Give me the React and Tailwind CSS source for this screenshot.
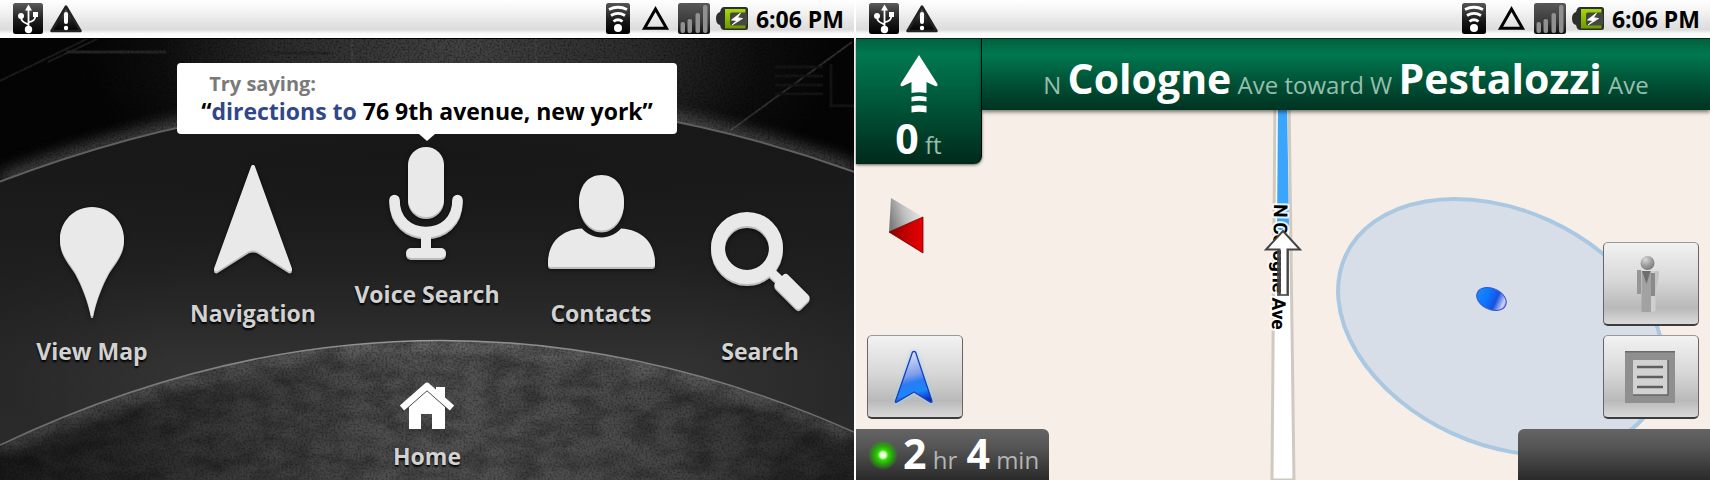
import React from "react";

function UsbIcon({ id }) {
  return (
    <svg className="h-8 w-[30px] shrink-0" viewBox="0 0 30 32" aria-hidden="true">
      <defs>
        <linearGradient id={id} x1="0" y1="0" x2="0" y2="1">
          <stop offset="0" stopColor="#5a5a5a" />
          <stop offset="0.55" stopColor="#1c1c1c" />
          <stop offset="1" stopColor="#000" />
        </linearGradient>
      </defs>
      <rect y="0" width="30" height="31" rx="2.5" fill={`url(#${id})`} />
      <g stroke="#fff" strokeWidth="1.8" fill="none">
        <path d="M15.5 6v20M15.5 21.5C11 19.5 8 18.500 8 13.500M15.500 19.500C20 18 22.500 17 22.500 12" />
      </g>
      <path d="M15.500 1.500l-3.500 6h7z" fill="#fff" />
      <circle cx="8" cy="13" r="3" fill="#fff" />
      <rect x="20" y="9" width="5" height="5" fill="#fff" />
      <circle cx="15.500" cy="26.500" r="3.700" fill="#fff" />
    </svg>
  );
}

function WarningIcon({ id }) {
  return (
    <svg className="h-8 w-8 shrink-0" viewBox="0 0 32 32" aria-hidden="true">
      <defs>
        <linearGradient id={id} x1="0" y1="0" x2="0" y2="1">
          <stop offset="0" stopColor="#6a6a6a" />
          <stop offset="0.6" stopColor="#1c1c1c" />
          <stop offset="1" stopColor="#000" />
        </linearGradient>
      </defs>
      <path
        d="M16 3.500L30.500 28H1.500z"
        fill={`url(#${id})`}
        stroke="#222"
        strokeWidth="2.500"
        strokeLinejoin="round"
      />
      <rect x="14" y="9" width="4" height="12" rx="2" fill="#fff" />
      <circle cx="16" cy="25" r="2.200" fill="#fff" />
    </svg>
  );
}

function WifiIcon({ id }) {
  return (
    <svg className="h-8 w-6 shrink-0" viewBox="0 0 24 32" aria-hidden="true">
      <defs>
        <linearGradient id={id} x1="0" y1="0" x2="0" y2="1">
          <stop offset="0" stopColor="#555" />
          <stop offset="0.6" stopColor="#151515" />
          <stop offset="1" stopColor="#000" />
        </linearGradient>
      </defs>
      <rect width="24" height="31" rx="2.500" fill={`url(#${id})`} />
      <g stroke="#fff" fill="none" strokeWidth="2.800">
        <path d="M3 6.500Q12 2 21 6.500" />
        <path d="M5 12.500Q12 8.300 19 12.500" />
        <path d="M7.500 18.500Q12 15 16.500 18.500" />
      </g>
      <circle cx="12" cy="25" r="4" fill="#fff" />
    </svg>
  );
}

function TriangleIcon() {
  return (
    <svg className="h-8 w-9 shrink-0" viewBox="0 0 36 32" aria-hidden="true">
      <path d="M19.500 6L30.500 25.300H8.500z" fill="none" stroke="#000" strokeWidth="3" />
    </svg>
  );
}

function SignalIcon({ id }) {
  return (
    <svg className="h-8 w-8 shrink-0" viewBox="0 0 32 32" aria-hidden="true">
      <defs>
        <linearGradient id={id} x1="0" y1="0" x2="0" y2="1">
          <stop offset="0" stopColor="#585858" />
          <stop offset="0.6" stopColor="#3a3a3a" />
          <stop offset="1" stopColor="#0c0c0c" />
        </linearGradient>
      </defs>
      <rect width="32" height="31" rx="2.500" fill={`url(#${id})`} />
      <g fill="#909090">
        <rect x="2.500" y="19" width="4.500" height="11" rx="2" />
        <rect x="9.500" y="16" width="4.500" height="14" rx="2" />
        <rect x="17.500" y="10" width="4.500" height="20" rx="2" />
        <rect x="25" y="2" width="4.500" height="28" rx="2" />
      </g>
    </svg>
  );
}

function BatteryIcon({ id }) {
  return (
    <svg className="h-8 w-8 shrink-0" viewBox="0 0 32 32" aria-hidden="true">
      <defs>
        <linearGradient id={id} x1="0" y1="0" x2="0" y2="1">
          <stop offset="0" stopColor="#a6d80c" />
          <stop offset="1" stopColor="#6f9800" />
        </linearGradient>
      </defs>
      <path
        d="M8 4h21.500q2.500 0 2.500 2.500v18q0 2.500-2.500 2.500H8q-2 0-3-2l-1-3q-4-1-4-6.500T4 9l1-3q1-2 3-2z"
        fill="#2d2f2a"
      />
      <path d="M9 6h20.500v4H16v12h13.500v3.500H9z" fill={`url(#${id})`} />
      <rect x="14" y="9.500" width="17" height="13" rx="2" fill="#45483f" />
      <path d="M24.500 10L15.500 17l5.500.5-5 4.500 10.500-6.500-5-.8z" fill="#fff" stroke="#fff" strokeWidth="0.800" />
    </svg>
  );
}

function StatusBar({ prefix }) {
  return (
    <header className="flex h-[38px] shrink-0 items-center justify-between bg-[linear-gradient(to_bottom,#ffffff_0%,#f6f6f6_25%,#e4e4e4_60%,#dcdcdc_78%,#fafafa_88%,#ffffff_100%)] pl-[13px] pr-[10px]">
      <div className="flex items-center gap-[7px]">
        <UsbIcon id={`${prefix}-usb`} />
        <WarningIcon id={`${prefix}-warn`} />
      </div>
      <div className="flex items-center gap-[6px]">
        <WifiIcon id={`${prefix}-wifi`} />
        <TriangleIcon />
        <SignalIcon id={`${prefix}-signal`} />
        <BatteryIcon id={`${prefix}-battery`} />
        <time className="pl-0.5 text-[23px] font-bold leading-8 text-black">6:06 PM</time>
      </div>
    </header>
  );
}

function DialBackdrop() {
  return (
    <svg
      className="absolute inset-0 h-full w-full"
      viewBox="0 0 854 442"
      preserveAspectRatio="none"
      aria-hidden="true"
    >
      <defs>
        <radialGradient id="sky" cx="0.54" cy="0.02" r="0.44">
          <stop offset="0" stopColor="#444" />
          <stop offset="0.5" stopColor="#2c2c2c" />
          <stop offset="0.8" stopColor="#0e0e0e" />
          <stop offset="1" stopColor="#050505" />
        </radialGradient>
        <linearGradient id="ring" x1="0" y1="0" x2="0" y2="1">
          <stop offset="0.15" stopColor="#151515" />
          <stop offset="0.45" stopColor="#212121" />
          <stop offset="0.7" stopColor="#323232" />
          <stop offset="1" stopColor="#3c3c3c" />
        </linearGradient>
        <radialGradient id="ringSides" cx="0.5" cy="0.6" r="0.52">
          <stop offset="0.6" stopColor="#1c1c1c" stopOpacity="0" />
          <stop offset="1" stopColor="#1c1c1c" stopOpacity="0.5" />
        </radialGradient>
        <linearGradient id="hub" x1="0" y1="0" x2="1" y2="0">
          <stop offset="0" stopColor="#1a1a1a" />
          <stop offset="0.25" stopColor="#383838" />
          <stop offset="0.5" stopColor="#545454" />
          <stop offset="0.75" stopColor="#4a4a4a" />
          <stop offset="1" stopColor="#242424" />
        </linearGradient>
        <linearGradient id="edge" x1="0" y1="0" x2="1" y2="0">
          <stop offset="0" stopColor="#6a6a6a" />
          <stop offset="0.5" stopColor="#999" />
          <stop offset="1" stopColor="#6a6a6a" />
        </linearGradient>
        <filter id="soft" x="-20%" y="-50%" width="140%" height="200%">
          <feGaussianBlur stdDeviation="8" />
        </filter>
        <filter id="stone" x="0" y="0" width="100%" height="100%">
          <feTurbulence type="fractalNoise" baseFrequency="0.035 0.06" numOctaves="6" seed="11" />
          <feColorMatrix values="0 0 0 0 0  0 0 0 0 0  0 0 0 0 0  2 0 0 0 -0.700" />
        </filter>
        <filter id="fine" x="0" y="0" width="100%" height="100%">
          <feTurbulence type="fractalNoise" baseFrequency="0.5" numOctaves="2" seed="3" />
          <feColorMatrix values="0 0 0 0 0  0 0 0 0 0  0 0 0 0 0  2 0 0 0 -0.800" />
        </filter>
        <clipPath id="hubClip">
          <path d="M0 407Q427 204 854 394V442H0z" />
        </clipPath>
        <clipPath id="skyClip">
          <path d="M0 0H854V133Q427 -20 0 143z" />
        </clipPath>
      </defs>

      <rect width="854" height="442" fill="url(#sky)" />
      <g clipPath="url(#skyClip)">
        <path d="M0 42L95 -4M48 23L110 -6" stroke="#1e1e1e" strokeWidth="2" />
        <path d="M66 13H166M250 14H330" stroke="#262626" strokeWidth="3" />
        <path d="M536 0V26M352 0V26" stroke="#4c4c4c" strokeWidth="1" />
        <path d="M852 3L730 92" stroke="#303030" strokeWidth="2" />
        <path d="M775 28h48M775 37h48M775 46h48M775 55h48M831 25v42h23" stroke="#151515" strokeWidth="3" fill="none" />
        <path d="M0 143Q427 -20 854 133" stroke="#888" strokeWidth="12" fill="none" filter="url(#soft)" opacity="0.700" />
        <rect width="854" height="150" filter="url(#fine)" opacity="0.500" />
      </g>
      <path d="M0 143Q427 -20 854 133V442H0z" fill="url(#ring)" />
      <path d="M0 143Q427 -20 854 133V442H0z" fill="url(#ringSides)" />
      <path d="M0 143Q427 -20 854 133" stroke="#606060" strokeWidth="2" fill="none" />

      <path d="M0 407Q427 204 854 394V442H0z" fill="url(#hub)" />
      <g clipPath="url(#hubClip)">
        <path d="M0 410Q427 207 854 397" stroke="#858585" strokeWidth="12" fill="none" filter="url(#soft)" opacity="0.600" />
        <rect y="290" width="854" height="152" filter="url(#stone)" opacity="0.300" />
        <rect y="290" width="854" height="152" filter="url(#fine)" opacity="0.400" />
      </g>
      <path d="M0 407Q427 204 854 394" stroke="url(#edge)" strokeWidth="1.500" fill="none" />
    </svg>
  );
}

function DockIcon({ children }) {
  return (
    <svg
      className="h-[116px] w-[116px] overflow-visible fill-[#e9e9e9] [filter:drop-shadow(0_2px_0_#bcbcbc)_drop-shadow(0_1px_2px_#00000099)]"
      viewBox="0 0 116 116"
      aria-hidden="true"
    >
      {children}
    </svg>
  );
}

function DockButton({ label, offset, children }) {
  return (
    <div className={`flex justify-center ${offset}`}>
      <button type="button" className="flex flex-col items-center gap-4">
        <DockIcon>{children}</DockIcon>
        <span className="whitespace-nowrap text-[23px] font-bold leading-8 text-[#d2d2d2] [text-shadow:0_2px_2px_#000]">
          {label}
        </span>
      </button>
    </div>
  );
}

function CarHome() {
  return (
    <section className="flex flex-col bg-black">
      <StatusBar prefix="home" />
      <main className="relative flex flex-1 flex-col border-t border-black">
        <DialBackdrop />
        <div className="relative flex flex-1 flex-col">
          <div className="relative mx-auto mt-6 rounded-[4px] bg-white px-6 pb-2 pt-[9px]">
            <p className="pl-2 text-[20px] font-bold leading-6 text-[#7a7a7a]">Try saying:</p>
            <p className="whitespace-nowrap text-[23px] font-bold leading-[30px] text-black">
              “<span className="text-[#30478a]">directions to</span> 76 9th avenue, new york”
            </p>
            <svg className="absolute left-1/2 top-full h-[7px] w-4 -translate-x-1/2" viewBox="0 0 16 7" aria-hidden="true">
              <path d="M0 0H16L8 7z" fill="#fff" />
            </svg>
          </div>

          <nav className="grid grid-cols-[168fr_154fr_194fr_154fr_164fr] items-start pl-2 pr-3">
            <DockButton label="View Map" offset="pt-[69px]">
              <path d="M58 4C75.700 4 90 18.300 90 36C90 51 81 59 75 69C68 82 62 97 59 113H57C54 97 48 82 41 69C35 59 26 51 26 36C26 18.300 40.300 4 58 4z" />
            </DockButton>
            <DockButton label="Navigation" offset="pt-[31px]">
              <path
                d="M58 2L95 104Q95 105 94 104L64 85Q58 82 52 85L22 104Q21 105 21 104z"
                stroke="#e9e9e9"
                strokeWidth="4"
                strokeLinejoin="round"
              />
            </DockButton>
            <DockButton label="Voice Search" offset="pt-3">
              <rect x="39" y="1" width="36" height="70" rx="18" />
              <path
                d="M25.500 54C25.500 75 40 86 57 86S88.500 75 88.500 54"
                fill="none"
                stroke="#e9e9e9"
                strokeWidth="10.500"
                strokeLinecap="round"
              />
              <rect x="52" y="88" width="10" height="18" />
              <rect x="37" y="102" width="40" height="10" rx="5" />
            </DockButton>
            <DockButton label="Contacts" offset="pt-[31px]">
              <path d="M5 98C5 78 18 64.500 39 63.500C44 69 51 72.500 58.500 72.500S73 69 78 63.500C99 64.500 112 78 112 98V99Q112 102 109 102H8Q5 102 5 99z" />
              <path d="M58.500 10C72 10 81 21 81 37C81 53 71 65.500 58.500 65.500S36 53 36 37C36 21 45 10 58.500 10z" />
            </DockButton>
            <DockButton label="Search" offset="pt-[69px]">
              <circle cx="45" cy="45" r="29" fill="none" stroke="#e9e9e9" strokeWidth="14" />
              <path d="M66 66L80 79" stroke="#e9e9e9" strokeWidth="9" />
              <rect x="72" y="79.500" width="36" height="18" rx="4" transform="rotate(45 90 88.500)" />
            </DockButton>
          </nav>

          <button type="button" className="mx-auto mb-2 mt-auto flex flex-col items-center gap-[10px]">
            <svg className="h-12 w-14" viewBox="0 0 56 48" aria-hidden="true">
              <path d="M37 5h9v16l-9-8z" fill="#fff" />
              <path d="M10 47V25L28 9L46 25V47H33V32H22V47z" fill="#fff" />
              <path d="M3 29L28 7L53 29" fill="none" stroke="#3a3a3a" strokeWidth="3" />
              <path d="M3 26L28 4L53 26" fill="none" stroke="#fff" strokeWidth="6.500" strokeLinejoin="round" />
            </svg>
            <span className="text-[23px] font-bold leading-8 text-[#d2d2d2] [text-shadow:0_2px_2px_#000]">Home</span>
          </button>
        </div>
      </main>
    </section>
  );
}

function MapCanvas() {
  return (
    <svg
      className="absolute inset-0 h-full w-full"
      viewBox="0 0 854 442"
      preserveAspectRatio="xMidYMid slice"
      role="img"
      aria-label="Map of N Cologne Ave"
    >
      <defs>
        <linearGradient id="dot" x1="0" y1="0" x2="1" y2="0">
          <stop offset="0" stopColor="#1a86ff" />
          <stop offset="0.35" stopColor="#0a78ff" />
          <stop offset="0.65" stopColor="#1a50e0" />
          <stop offset="0.92" stopColor="#cfd3f5" />
          <stop offset="1" stopColor="#8a80cc" />
        </linearGradient>
      </defs>
      <rect width="854" height="442" fill="#f6eee7" />
      <ellipse
        cx="645"
        cy="289"
        rx="171"
        ry="117"
        transform="rotate(24.600 645 289)"
        fill="#d7dee7"
        stroke="#aac8e2"
        strokeWidth="4"
      />
      <path d="M419 60H433L438 442H416z" fill="#fff" stroke="#cfcabf" strokeWidth="3" />
      <path d="M422 60H431L433 192H421z" fill="#3ba5fb" />
      <text
        transform="translate(418 166) rotate(91)"
        className="font-['Roboto',sans-serif]"
        fontSize="19"
        fontWeight="700"
        fill="#000"
        stroke="#fff"
        strokeWidth="4"
        strokeLinejoin="round"
        strokeOpacity="0.850"
        paintOrder="stroke"
      >
        N Cologne Ave
      </text>
      <path d="M421 212H433V258H421z" fill="#444" opacity="0.800" />
      <path d="M427 193L444 211.500H431.500V256H425V211.500H410z" fill="#fff" />
      <path d="M431.500 257V211.500H444L427 193L410 211.500H423.500V257" fill="none" stroke="#444" strokeWidth="2" />
      <g transform="rotate(24 635.500 261)">
        <ellipse cx="635.500" cy="261" rx="15.500" ry="10.500" fill="url(#dot)" stroke="#3b55c8" strokeWidth="1" />
      </g>
    </svg>
  );
}

function MapButton({ label, children }) {
  return (
    <button
      type="button"
      aria-label={label}
      className="flex h-[84px] w-24 items-center justify-center rounded-[5px] border border-[#666] border-b-2 border-b-[#3c3c3c] border-t-[#999] bg-[linear-gradient(to_bottom,#f2f2f2_0%,#d8d8d8_45%,#b9b9b9_80%,#dadada_100%)] pr-0.5"
    >
      {children}
    </button>
  );
}

function PersonIcon() {
  return (
    <svg className="h-[60px] w-10" viewBox="0 0 40 60" aria-hidden="true">
      <defs>
        <radialGradient id="head" cx="0.35" cy="0.25" r="0.8">
          <stop offset="0" stopColor="#d8d8d8" />
          <stop offset="0.6" stopColor="#9a9a9a" />
          <stop offset="1" stopColor="#777" />
        </radialGradient>
      </defs>
      <path d="M7 16H11V40H7z" fill="#969696" />
      <path d="M11.500 17H21V58H11.500z" fill="#a2a2a2" />
      <path d="M21 17H25.500V57L21 58z" fill="#cfcfcf" />
      <path d="M21 19H25V42H21z" fill="#8a8a8a" />
      <path d="M25 17H29V22L25 42z" fill="#c4c4c4" />
      <path d="M12 17H20.500L16.500 30z" fill="#6e6e6e" />
      <circle cx="17.500" cy="9" r="7" fill="url(#head)" />
    </svg>
  );
}

function ListIcon() {
  return (
    <svg className="h-[52px] w-[50px]" viewBox="0 0 50 52" aria-hidden="true">
      <rect width="50" height="52" fill="#8f8f8f" />
      <path d="M0 0H50V1.500H0z" fill="#6a6a6a" />
      <rect x="8" y="9" width="35" height="35" fill="#d2d2d2" />
      <path d="M8 44h35v-35" fill="none" stroke="#666" strokeWidth="1.500" />
      <path d="M12 16H38M12 26H38M12 36H38" stroke="#5e5e5e" strokeWidth="2.500" />
    </svg>
  );
}

function LocationArrowIcon() {
  return (
    <svg className="h-14 w-12 [filter:drop-shadow(0_0_2px_#9fd8f0)]" viewBox="0 0 48 56" aria-hidden="true">
      <defs>
        <linearGradient id="loc" x1="0.400" y1="0" x2="0.600" y2="1">
          <stop offset="0" stopColor="#e0e6fa" />
          <stop offset="0.45" stopColor="#7f9eea" />
          <stop offset="0.6" stopColor="#2a7cf2" />
          <stop offset="0.8" stopColor="#1c86fb" />
          <stop offset="1" stopColor="#0a2ec0" />
        </linearGradient>
      </defs>
      <path
        d="M22.500 3Q24 2 25.500 3L42 52Q42 54 40 53L24 43L7 53Q5 54 5.500 52z"
        fill="url(#loc)"
        stroke="#1d3cb8"
        strokeWidth="1.300"
        strokeLinejoin="round"
      />
    </svg>
  );
}

function CompassIcon() {
  return (
    <svg className="h-14 w-9" viewBox="0 0 36 56" aria-hidden="true">
      <defs>
        <linearGradient id="needle" x1="0" y1="0.600" x2="1" y2="0.300">
          <stop offset="0" stopColor="#7c7c7c" />
          <stop offset="0.45" stopColor="#c0c0c0" />
          <stop offset="1" stopColor="#f0f0f0" />
        </linearGradient>
        <linearGradient id="needleRed" x1="0" y1="0" x2="1" y2="0">
          <stop offset="0" stopColor="#8a0000" />
          <stop offset="0.6" stopColor="#cc0000" />
          <stop offset="1" stopColor="#e80000" />
        </linearGradient>
      </defs>
      <path d="M3 0L35 19L1 34z" fill="url(#needle)" />
      <path d="M35 19V55L1 34z" fill="url(#needleRed)" stroke="#6a0000" strokeWidth="0.800" />
    </svg>
  );
}

function Navigation() {
  return (
    <section className="flex flex-col bg-[#f6eee7]">
      <StatusBar prefix="nav" />
      <main className="relative flex flex-1 flex-col">
        <MapCanvas />
        <div className="relative flex flex-1 flex-col">
          <div className="flex items-start border-t border-[#0c2a1e]">
            <div className="flex h-[125px] w-[126px] shrink-0 flex-col items-center rounded-br-[8px] border-r border-black bg-[linear-gradient(to_bottom,#00613f_0%,#00784f_12%,#00573a_50%,#002a1b_100%)] pt-[14px] shadow-[0_1px_3px_#00000099]">
              <svg className="h-[60px] w-10 shrink-0" viewBox="0 0 40 60" aria-hidden="true">
                <g fill="#fff">
                  <path d="M20 2L38.500 31Q39 34 36 33L27.500 29V40Q20 38.500 12.500 40V29L4 33Q1 34 1.500 31z" />
                  <path d="M12.500 44Q20 42 27.500 44V48.500Q20 47 12.500 48.500z" />
                  <path d="M12.500 53Q20 51.500 27.500 53V59.500Q20 58 12.500 59.500z" />
                </g>
              </svg>
              <p className="text-2xl leading-[50px] text-[#96bfae]">
                <strong className="text-[41px] font-bold text-white">0</strong> ft
              </p>
            </div>
            <h1 className="flex h-[71px] flex-1 items-center justify-center whitespace-nowrap bg-[linear-gradient(to_bottom,#00613f_0%,#00784f_22%,#00573a_55%,#003322_100%)] pt-2 text-2xl font-normal text-[#96bfae] shadow-[0_2px_4px_#00000088]">
              <span>
                N <strong className="text-[41px] font-bold text-white">Cologne</strong> Ave toward W{" "}
                <strong className="text-[41px] font-bold text-white">Pestalozzi</strong> Ave
              </span>
            </h1>
          </div>

          <div className="flex flex-1 items-stretch justify-between px-[11px] pb-[10px]">
            <div className="flex flex-col justify-between pt-[34px]">
              <div className="pl-[21px]">
                <CompassIcon />
              </div>
              <MapButton label="My location">
                <LocationArrowIcon />
              </MapButton>
            </div>
            <div className="flex flex-col justify-end gap-[9px]">
              <MapButton label="Street view">
                <PersonIcon />
              </MapButton>
              <MapButton label="Directions list">
                <ListIcon />
              </MapButton>
            </div>
          </div>

          <footer className="flex h-[51px] items-stretch justify-between">
            <div className="flex items-center rounded-tr-[6px] bg-[linear-gradient(to_bottom,#646464_0%,#555555_35%,#2a2a2a_100%)] pl-3 pr-[10px]">
              <svg className="h-8 w-8" viewBox="0 0 32 32" aria-hidden="true">
                <defs>
                  <radialGradient id="gps">
                    <stop offset="0" stopColor="#fff" />
                    <stop offset="0.2" stopColor="#d6ffc0" />
                    <stop offset="0.35" stopColor="#35d80a" />
                    <stop offset="0.6" stopColor="#26a808" />
                    <stop offset="1" stopColor="#26a808" stopOpacity="0" />
                  </radialGradient>
                </defs>
                <circle cx="15" cy="16" r="15" fill="url(#gps)" />
              </svg>
              <p className="whitespace-nowrap pl-[3px] pt-1 text-2xl leading-[46px] text-[#b4b4b4]">
                <strong className="text-[41px] font-bold text-white">2</strong> hr{" "}
                <strong className="pl-[3px] text-[41px] font-bold text-white">4</strong> min
              </p>
            </div>
            <div className="w-48 rounded-tl-[6px] bg-[linear-gradient(to_bottom,#646464_0%,#555555_35%,#2a2a2a_100%)]" />
          </footer>
        </div>
      </main>
    </section>
  );
}

export default function App() {
  return (
    <div className="grid min-h-screen grid-cols-2 gap-0.5 bg-white font-['Open_Sans','Noto_Sans',sans-serif]">
      <CarHome />
      <Navigation />
    </div>
  );
}
